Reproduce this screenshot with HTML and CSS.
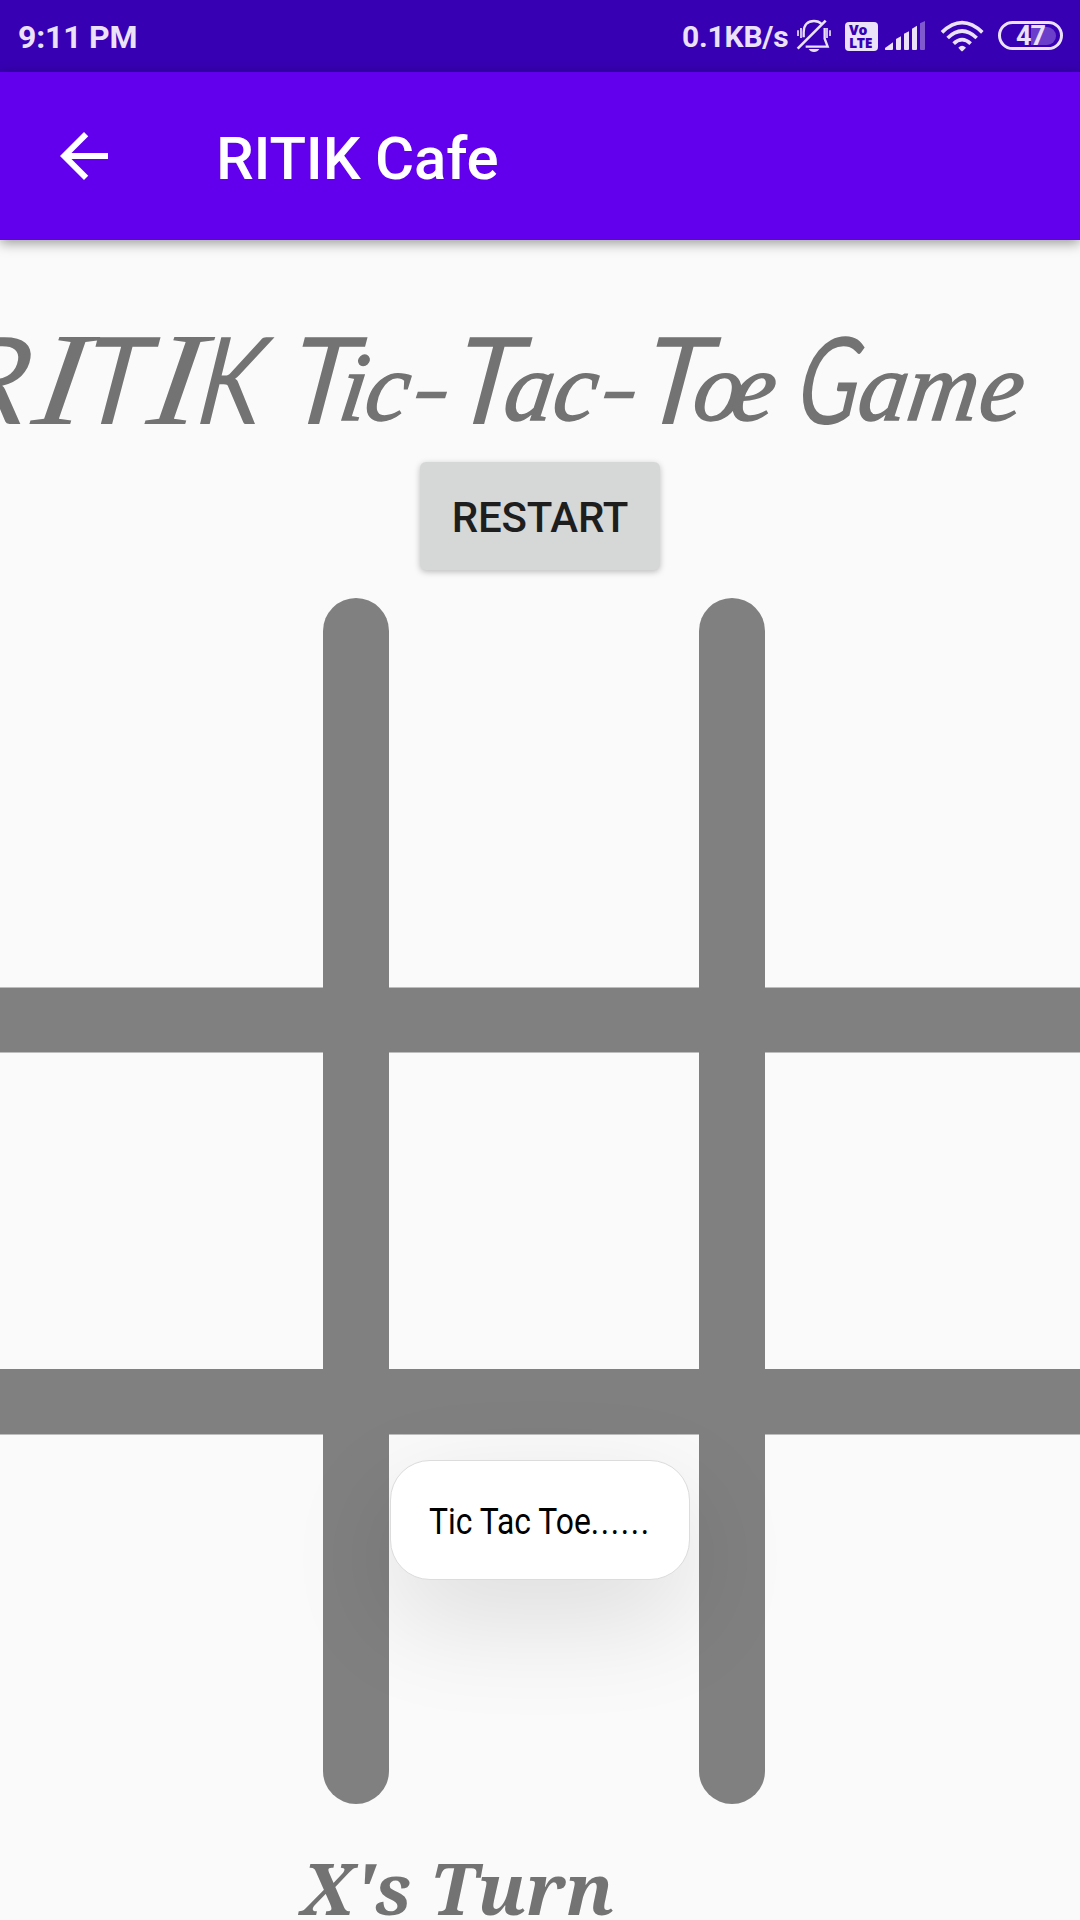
FILE: index.html
```html
<!DOCTYPE html>
<html lang="en">
<head>
<meta charset="utf-8">
<title>RITIK Cafe</title>
<link rel="stylesheet" href="styles.css">
</head>
<body>
<div class="screen">
  <header class="status">
    <span class="clock">9:11 PM</span>
    <div class="indicators">
      <span class="speed">0.1KB/s</span>
      <svg class="icon bell" viewBox="408 57 108 102">
        <g fill="none" stroke="currentColor" stroke-width="7">
          <path d="M431 112V97C431 75 443 63 462 63C472 63 479 66 485 72"/>
          <path d="M494 84V116L503 140H437"/>
          <path d="M413 146L497 62" stroke-width="8"/>
          <path d="M414 91V108M423 84V114M501 84V114M510 91V108" stroke-width="5"/>
        </g>
        <path d="M446 147H478Q473 156 462 156Q451 156 446 147Z" fill="currentColor"/>
      </svg>
      <span class="volte"><span>Vo</span><span>LTE</span></span>
      <svg class="icon signal" viewBox="675 60 123 93">
        <g fill="currentColor">
          <path d="M675 149V144L699 127V147Q699 150 696 150H677Z"/>
          <path d="M708 117L723 109V147Q723 150 720 150H711Q708 150 708 147Z"/>
          <path d="M732 101L747 94V147Q747 150 744 150H735Q732 150 732 147Z"/>
          <path d="M756 86L771 77V147Q771 150 768 150H759Q756 150 756 147Z"/>
          <path d="M780 70L795 63V147Q795 150 792 150H783Q780 150 780 147Z" opacity=".4"/>
        </g>
      </svg>
      <svg class="icon wifi" viewBox="840 60 132 96">
        <g fill="none" stroke="currentColor" stroke-width="11">
          <path d="M846 97Q906 39 967 97"/>
          <path d="M863 114Q906 72 950 114"/>
          <path d="M881 131Q906 107 932 131"/>
        </g>
        <path d="M895 143Q906 131 918 143L909 152Q906 155 903 152Z" fill="currentColor"/>
      </svg>
      <span class="battery"><span class="charge"></span><span class="percent">47</span></span>
    </div>
  </header>

  <div class="appbar">
    <svg class="back" viewBox="0 0 24 24"><path d="M20 11H7.83l5.59-5.59L12 4l-8 8 8 8 1.41-1.41L7.83 13H20z" fill="#fff"/></svg>
    <h1>RITIK Cafe</h1>
  </div>

  <main>
    <svg class="headline" viewBox="0 0 1080 132"><text y="0" transform="translate(0 94) skewX(-8)"><tspan x="-50" textLength="76" lengthAdjust="spacingAndGlyphs">R</tspan><tspan class="serif" x="30" textLength="52" lengthAdjust="spacingAndGlyphs">I</tspan><tspan x="78">T</tspan><tspan class="serif" x="145" textLength="52" lengthAdjust="spacingAndGlyphs">I</tspan><tspan x="195" textLength="64" lengthAdjust="spacingAndGlyphs">K</tspan> <tspan x="285">T</tspan><tspan class="low" x="336 362" y="-4">ic</tspan><tspan class="dash" x="405" y="-2" textLength="45" lengthAdjust="spacingAndGlyphs">-</tspan><tspan x="450" y="0">T</tspan><tspan class="low" x="501 550" y="-4">ac</tspan><tspan class="dash" x="593" y="-2" textLength="45" lengthAdjust="spacingAndGlyphs">-</tspan><tspan x="639" y="0">T</tspan><tspan class="low" x="690 728" y="-4">oe</tspan> <tspan x="794" y="0" textLength="62" lengthAdjust="spacingAndGlyphs">G</tspan><tspan class="low" x="855 904 976" y="-4">ame</tspan></text></svg>

    <button class="restart">RESTART</button>

    <section class="board">
      <svg viewBox="0 0 1080 1206">
        <g fill="#808080">
          <rect x="323" y="0" width="66" height="1206" rx="33"/>
          <rect x="699" y="0" width="66" height="1206" rx="33"/>
          <rect y="389.5" width="1080" height="65"/>
          <rect y="771" width="1080" height="65.5"/>
        </g>
      </svg>
      <div class="toast"><span>Tic Tac Toe<span class="dots">......</span></span></div>
    </section>

    <p class="turn"><span>X's Turn</span></p>
  </main>
</div>
</body>
</html>
```

FILE: styles.css
```css
* { box-sizing: border-box; }
body { margin: 0; background: #fafafa; font-family: Roboto, sans-serif; }
.screen { width: 1080px; height: 1920px; overflow: hidden; display: flex; flex-direction: column; }

.status { height: 72px; flex: none; background: #3700b3; color: #ebe2fa; display: flex; justify-content: space-between; padding: 0 17px 0 18px; }
.clock { font-size: 32px; font-weight: 700; line-height: 74px; letter-spacing: -.2px; }
.indicators { display: flex; align-items: flex-start; }
.speed { font-size: 30px; font-weight: 700; line-height: 74px; letter-spacing: -.2px; width: 114px; white-space: nowrap; }
.icon { display: block; flex: none; }
.bell { width: 36px; height: 34px; margin-top: 19px; }
.volte { width: 33px; height: 29px; margin: 22px 7px 0 13px; border-radius: 4px; background: currentColor; display: flex; flex-direction: column; align-items: flex-start; padding: 1px 0 0 4px; }
.volte span { color: #3700b3; font: 800 14px/13px "Open Sans", sans-serif; letter-spacing: -.3px; }
.signal { width: 41px; height: 31px; margin-top: 20px; }
.wifi { width: 44px; height: 32px; margin: 20px 0 0 14px; }
.battery { width: 65px; height: 29px; margin: 21px 0 0 14px; border: 3px solid currentColor; border-radius: 15px; display: grid; place-items: center; }
.charge, .percent { grid-area: 1 / 1; }
.charge { justify-self: end; width: 25px; height: 18px; margin-right: 4px; border-radius: 0 9px 9px 0; background: #6b3fc9; }
.percent { font-size: 27px; font-weight: 700; line-height: 24px; letter-spacing: -1px; }

.appbar { height: 168px; flex: none; background: #6200ee; display: flex; align-items: center; padding-left: 48px; box-shadow: 0 3px 12px rgba(0,0,0,.4); }
.back { width: 72px; height: 72px; }
.appbar h1 { margin: 5px 0 0 96px; font-size: 60px; font-weight: 500; line-height: 70px; letter-spacing: -.2px; color: #fff; white-space: nowrap; }

main { display: flex; flex-direction: column; align-items: center; padding-top: 90px; }
.headline { width: 1080px; height: 132px; display: block; overflow: visible; fill: #737373; font: italic 121px Lato, sans-serif; }
.headline .serif { font: italic 133px "Liberation Serif", serif; }
.headline .low { font: italic 98px "Liberation Serif", serif; stroke: #737373; stroke-width: 1.5px; }
.headline .dash { font-size: 90px; }
.restart { width: 240px; height: 108px; border: 0; border-radius: 6px; background: #d6d7d7; color: #1e1e1e; font: 500 42px/108px Roboto, sans-serif; letter-spacing: -.2px; padding: 2px 0 0; box-shadow: 0 2px 6px rgba(0,0,0,.25); }

.board { position: relative; width: 1080px; height: 1206px; margin-top: 28px; }
.board svg { display: block; width: 1080px; height: 1206px; }
.toast { position: absolute; left: 390px; top: 862px; width: 300px; height: 120px; border: 1px solid #dcdcdc; border-radius: 40px; background: #fff; color: #000; font-size: 36px; line-height: 122px; white-space: nowrap; padding-left: 38px; box-shadow: 0 38px 110px rgba(0,0,0,.12); }
.toast > span { display: inline-block; transform-origin: left; transform: scaleX(.885); }
.toast .dots { letter-spacing: 1.8px; }
.turn { margin: 47px 0 0; align-self: flex-start; padding-left: 301px; font: italic 700 72px/72px "Noto Serif", "DejaVu Serif Condensed", "DejaVu Serif", serif; color: #737373; white-space: nowrap; }
.turn span { display: inline-block; }
```
